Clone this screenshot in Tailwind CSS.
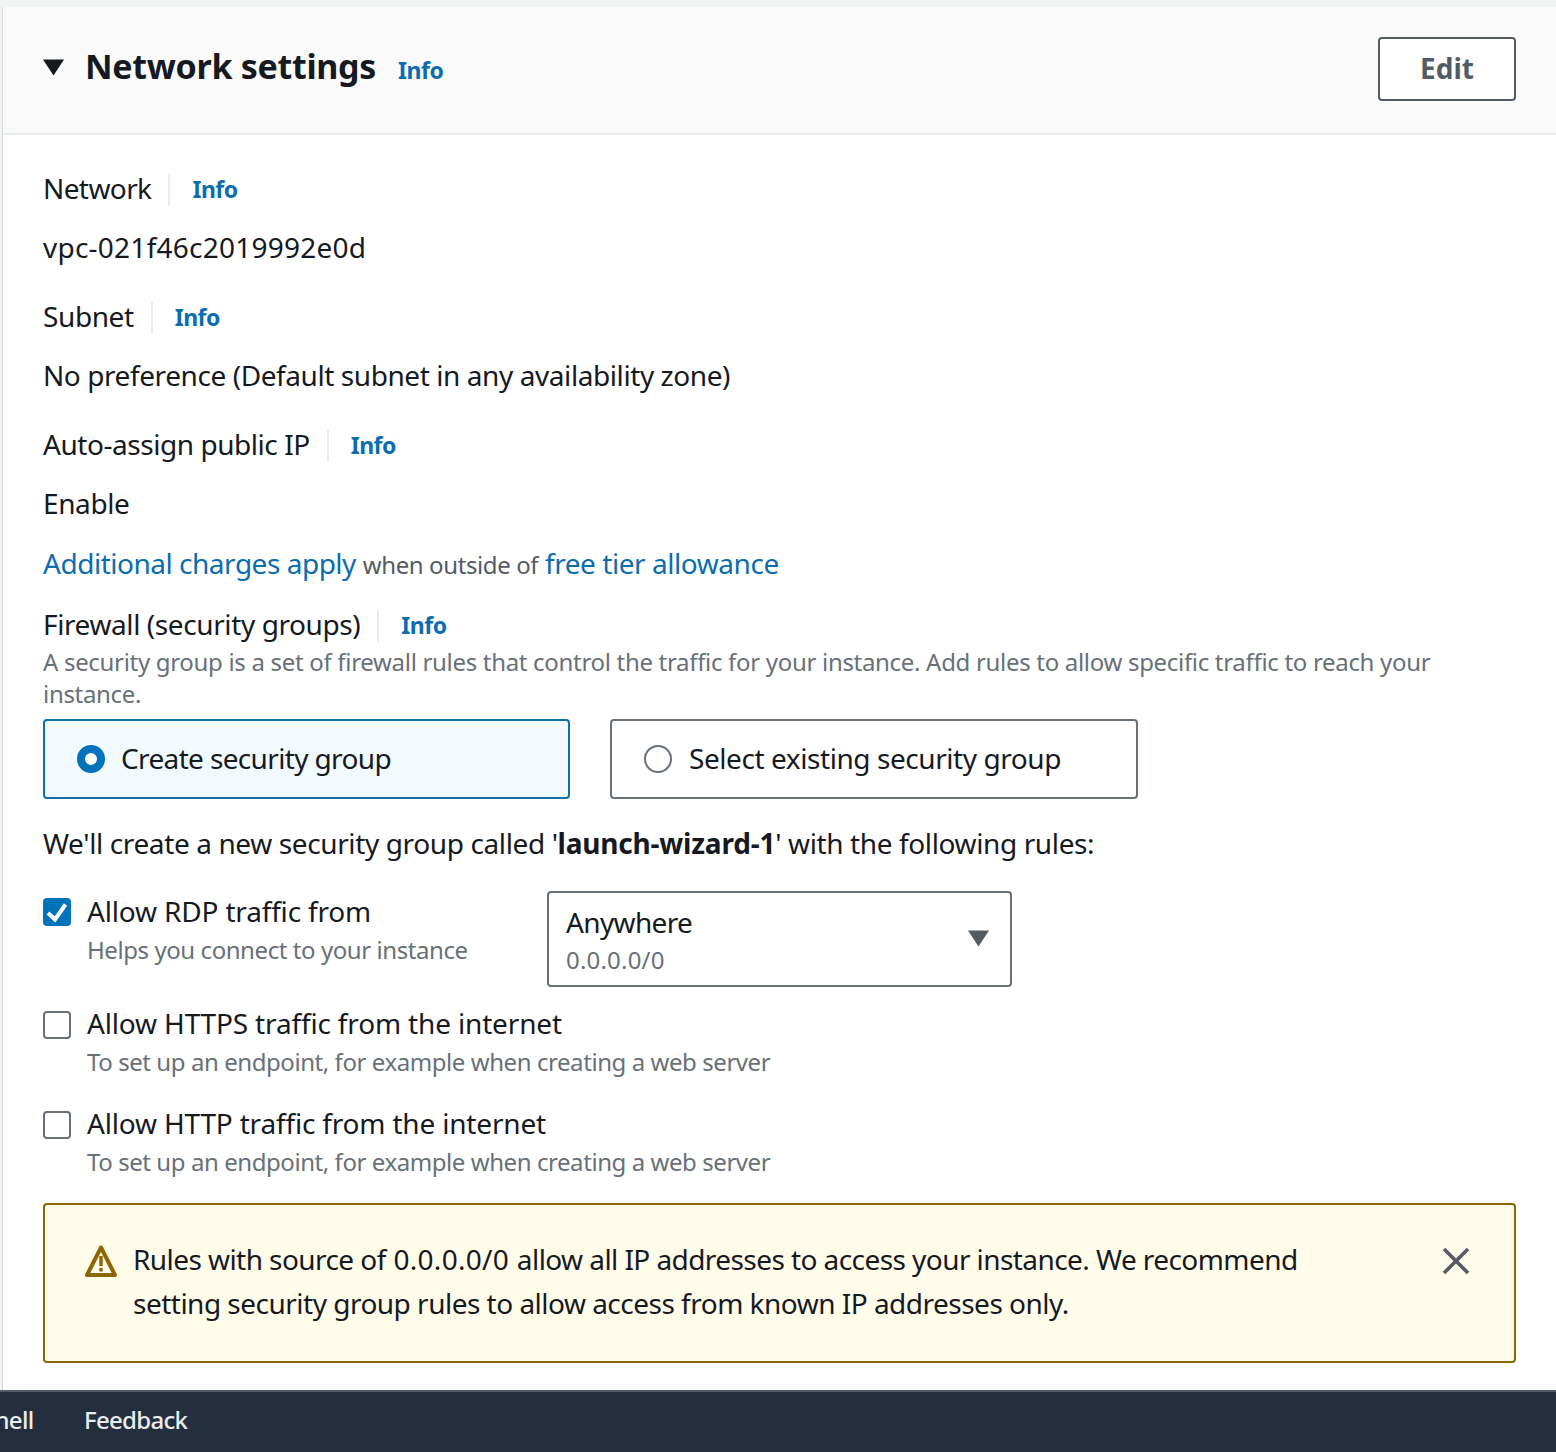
<!DOCTYPE html>
<html>
<head>
<meta charset="utf-8">
<script src="https://cdn.jsdelivr.net/npm/@tailwindcss/browser@4"></script>
</head>
<body class="m-0 bg-white">
<div class="relative w-[1556px] h-[1452px] overflow-hidden flex flex-col bg-[#f2f3f3] font-['Noto_Sans',sans-serif] text-[#16191f] text-[28px] tracking-[-0.4px]">
  <div class="h-[7px] shrink-0"></div>
  <main class="flex-1 min-h-0 ml-[2px] border-l-[1px] border-[#d5dbdb] bg-white flex flex-col">
    <header class="h-[128px] shrink-0 bg-[#fafafa] border-b-[2px] border-[#eaeded] pl-[40px] pr-[40px] flex items-center">
      <svg class="w-[21px] h-[17px] mr-[21px] mb-[6px]" viewBox="0 0 21 17"><path d="M0 0.5H21L10.5 16.5Z" fill="#16191f"/></svg>
      <h2 class="text-[34px] leading-[44px] font-bold m-0 mb-[8px] tracking-[-0.3px]">Network settings</h2>
      <a class="ml-[22px] mt-[1px] text-[23px] font-bold text-[#0b6db0] tracking-[-0.5px]">Info</a>
      <button class="ml-auto w-[138px] h-[64px] mb-[3px] bg-white border-[2px] border-[#545b64] rounded-[4px] text-[#545b64] font-bold text-[28px] tracking-[0px]"><span class="block mb-[2px]">Edit</span></button>
    </header>
    <div class="pl-[40px] pr-[40px] pt-[33px] flex flex-col">
      <div class="h-[40px] leading-[40px] flex items-center"><span class="tracking-[-0.6px]">Network</span><span class="w-[2px] h-[32px] bg-[#eaeded] ml-[17px] mt-[4px] mr-[22px]"></span><a class="text-[23px] mt-[2px] font-bold text-[#0b6db0] tracking-[-0.5px]">Info</a></div>
      <div class="h-[40px] leading-[40px] mt-[19px] tracking-[0.24px]">vpc-021f46c2019992e0d</div>
      <div class="h-[40px] leading-[40px] mt-[29px] flex items-center"><span>Subnet</span><span class="w-[2px] h-[32px] bg-[#eaeded] ml-[17px] mt-[4px] mr-[22px]"></span><a class="text-[23px] mt-[2px] font-bold text-[#0b6db0] tracking-[-0.5px]">Info</a></div>
      <div class="h-[40px] leading-[40px] mt-[19px] tracking-[-0.42px]">No preference (Default subnet in any availability zone)</div>
      <div class="h-[40px] leading-[40px] mt-[29px] flex items-center"><span class="tracking-[-0.45px]">Auto-assign public IP</span><span class="w-[2px] h-[32px] bg-[#eaeded] ml-[17px] mt-[4px] mr-[22px]"></span><a class="text-[23px] mt-[2px] font-bold text-[#0b6db0] tracking-[-0.5px]">Info</a></div>
      <div class="h-[40px] leading-[40px] mt-[19px]">Enable</div>
      <div class="h-[40px] leading-[40px] mt-[20px]"><a class="text-[#0b6db0] tracking-[-0.48px]">Additional charges apply</a> <span class="text-[24px] text-[#545b64]">when outside of</span> <a class="text-[#0b6db0] tracking-[-0.45px]">free tier allowance</a></div>
      <div class="h-[40px] leading-[40px] mt-[21px] flex items-center"><span>Firewall (security groups)</span><span class="w-[2px] h-[32px] bg-[#eaeded] ml-[17px] mt-[4px] mr-[22px]"></span><a class="text-[23px] mt-[2px] font-bold text-[#0b6db0] tracking-[-0.5px]">Info</a></div>
      <p class="m-0 mt-[2px] text-[24px] leading-[32px] text-[#687078] w-[1473px] tracking-[-0.31px]">A security group is a set of firewall rules that control the traffic for your instance. Add rules to allow specific traffic to reach your instance.</p>
      <div class="mt-[9px] flex gap-[40px]">
        <div class="w-[527px] h-[80px] bg-[#f1faff] border-[2px] border-[#126fa8] rounded-[4px] pl-[32px] flex items-center">
          <span class="w-[28px] h-[28px] rounded-full border-[8px] border-[#0073bb] bg-white shrink-0"></span>
          <span class="ml-[16px] mb-[2px] tracking-[-0.64px]">Create security group</span>
        </div>
        <div class="w-[528px] h-[80px] bg-white border-[2px] border-[#687078] rounded-[4px] pl-[32px] flex items-center">
          <span class="w-[28px] h-[28px] rounded-full border-[2px] border-[#687078] bg-white shrink-0"></span>
          <span class="ml-[17px] mb-[2px] tracking-[-0.43px]">Select existing security group</span>
        </div>
      </div>
      <div class="h-[40px] leading-[40px] mt-[24px] tracking-[-0.38px]">We'll create a new security group called '<b class="tracking-[-0.2px]">launch-wizard-1</b>' with the following rules:</div>
      <div class="mt-[28px] flex h-[96px]">
        <div class="w-[504px] shrink-0 flex">
          <span class="w-[28px] h-[28px] mt-[7px] rounded-[4px] bg-[#0073bb] block shrink-0">
            <svg class="w-[28px] h-[28px] block" viewBox="0 0 28 28"><path d="M5 15L12 21.5L22.5 6.5" fill="none" stroke="#fff" stroke-width="4"/></svg>
          </span>
          <div class="ml-[16px]">
            <div class="h-[40px] leading-[40px] tracking-[-0.17px]">Allow RDP traffic from</div>
            <div class="text-[24px] leading-[32px] mt-[3px] text-[#687078] tracking-[-0.43px]">Helps you connect to your instance</div>
          </div>
        </div>
        <div class="w-[465px] h-[96px] border-[2px] border-[#687078] rounded-[4px] relative pl-[17px] pt-[9px]">
          <div class="leading-[40px] h-[40px] tracking-[-0.65px]">Anywhere</div>
          <div class="text-[24px] leading-[32px] mt-[2px] text-[#687078] tracking-[0.2px]">0.0.0.0/0</div>
          <svg class="absolute right-[21px] top-[37px] w-[21px] h-[17px]" viewBox="0 0 21 17"><path d="M0 0.5H21L10.5 16.5Z" fill="#545b64"/></svg>
        </div>
      </div>
      <div class="mt-[16px] flex h-[84px]">
        <span class="w-[28px] h-[28px] mt-[8px] rounded-[4px] border-[2px] border-[#687078] bg-white shrink-0"></span>
        <div class="ml-[16px]">
          <div class="h-[40px] leading-[40px] tracking-[-0.16px]">Allow HTTPS traffic from the internet</div>
          <div class="text-[24px] leading-[32px] mt-[3px] text-[#687078] tracking-[-0.43px]">To set up an endpoint, for example when creating a web server</div>
        </div>
      </div>
      <div class="mt-[16px] flex h-[84px]">
        <span class="w-[28px] h-[28px] mt-[8px] rounded-[4px] border-[2px] border-[#687078] bg-white shrink-0"></span>
        <div class="ml-[16px]">
          <div class="h-[40px] leading-[40px] tracking-[-0.18px]">Allow HTTP traffic from the internet</div>
          <div class="text-[24px] leading-[32px] mt-[3px] text-[#687078] tracking-[-0.43px]">To set up an endpoint, for example when creating a web server</div>
        </div>
      </div>
      <div class="mt-[16px] h-[160px] w-[1473px] bg-[#fffce9] border-[2px] border-[#8d6605] rounded-[4px] pl-[40px] pr-[40px] pt-[32px] flex relative">
        <svg class="w-[32px] h-[32px] mt-[8px] shrink-0" viewBox="0 0 32 32"><path d="M16 2.5L2 30H30Z" fill="none" stroke="#8d6605" stroke-width="4" stroke-linejoin="round"/><path d="M14.3 11H17.7V21H14.3ZM14.3 23H17.7V26.4H14.3Z" fill="#8d6605"/></svg>
        <div class="ml-[16px] leading-[44px] w-[1200px]">
          <div class="tracking-[-0.57px]">Rules with source of <span class="tracking-[0.3px] mx-[1px]">0.0.0.0/0</span> allow all IP addresses to access your instance. We recommend</div>
          <div class="tracking-[-0.51px]">setting security group rules to allow access from known IP addresses only.</div>
        </div>
        <svg class="absolute right-[44px] top-[42px] w-[28px] h-[28px]" viewBox="0 0 28 28"><path d="M2 2L26 26M26 2L2 26" stroke="#545b64" stroke-width="3.6" fill="none"/></svg>
      </div>
    </div>
  </main>
  <footer class="absolute left-0 right-0 bottom-0 h-[62px] bg-[#232f3e] border-t-[2px] border-[#545b64] text-[24px] text-[#eaeded] font-medium tracking-[-0.7px] flex items-center">
    <span class="absolute left-[-18px] mb-[4px]">Shell</span>
    <span class="absolute left-[84px] mb-[4px]">Feedback</span>
  </footer>
</div>
</body>
</html>
